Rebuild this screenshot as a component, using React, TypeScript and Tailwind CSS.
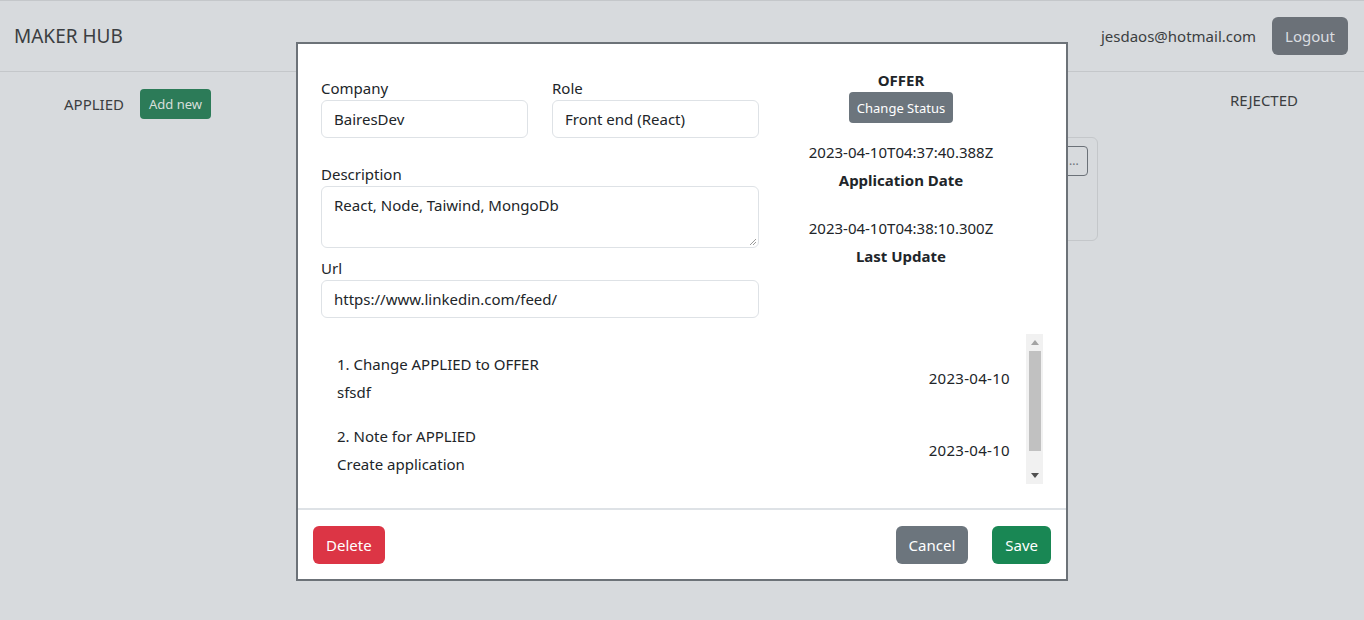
import React from "react";

function Field({ label, value, className = "" }: { label: string; value: string; className?: string }) {
  return (
    <div className={className}>
      <div className="h-[24px] leading-[24px]">{label}</div>
      <div className="h-[38px] rounded-[6px] border border-[#dee2e6] px-[12px] flex items-center">{value}</div>
    </div>
  );
}

function Note({ n, title, text, date }: { n: number; title: string; text: string; date: string }) {
  return (
    <div className="flex items-center justify-between px-[16px]">
      <div className="leading-[28px]">
        <div>
          {n}. {title}
        </div>
        <div>{text}</div>
      </div>
      <div className="tracking-[0.3px]">{date}</div>
    </div>
  );
}

export default function App() {
  return (
    <div className="relative w-[1364px] h-[620px] overflow-hidden bg-[#d7dadd] font-['Noto_Sans',sans-serif] text-[15px] leading-[24px] text-[#3b3e41]">
      <header className="h-[72px] border-t border-b border-[#c4c7ca] flex items-center justify-between pl-[14px] pr-[16px]">
        <div className="text-[19px]">MAKER HUB</div>
        <div className="flex items-center gap-[16px]">
          <span>jesdaos@hotmail.com</span>
          <button className="h-[38px] px-[13px] rounded-[6px] bg-[#6b7178] text-[#dadde0]">Logout</button>
        </div>
      </header>

      <main className="flex items-start">
        <div className="pl-[64px] pt-[17px] flex items-center gap-[16px]">
          <span>APPLIED</span>
          <button className="h-[30px] px-[9px] rounded-[4px] bg-[#2c7b58] text-[#d7dfdb] text-[13px]">Add new</button>
        </div>
        <div className="flex-1 flex justify-end pt-[65px]">
          <div className="w-[250px] h-[104px] rounded-[6px] border border-[#c4c7ca] flex justify-end items-start pt-[8px] pr-[9px]">
            <div className="w-[28px] h-[30px] rounded-[4px] border border-[#6b7178] flex items-center justify-center text-[12px] text-[#6b7178]">
              ...
            </div>
          </div>
        </div>
        <div className="pl-[132px] pr-[66px] pt-[16px]">REJECTED</div>
      </main>

      <div className="absolute left-[296px] top-[42px] w-[772px] h-[539px] bg-white border-2 border-[#6c7278] flex flex-col text-[#212529]">
        <div className="flex-1 pl-[23px] pt-[24px]">
          <div className="flex">
            <div className="w-[438px] pt-[8px]">
              <div className="grid grid-cols-2 gap-[24px]">
                <Field label="Company" value="BairesDev" />
                <Field label="Role" value="Front end (React)" />
              </div>
              <div className="mt-[24px]">
                <div className="h-[24px]">Description</div>
                <div className="relative h-[62px] rounded-[6px] border border-[#dee2e6] px-[12px] pt-[6px]">
                  React, Node, Taiwind, MongoDb
                  <svg className="absolute right-[1px] bottom-[1px]" width="9" height="9" viewBox="0 0 9 9">
                    <path d="M8 2 L2 8 M8 5 L5 8" stroke="#9a9a9a" strokeWidth="1" />
                  </svg>
                </div>
              </div>
              <Field className="mt-[8px]" label="Url" value="https://www.linkedin.com/feed/" />
            </div>
            <div className="w-[284px] flex flex-col items-center text-center">
              <div className="font-bold">OFFER</div>
              <button className="h-[31px] px-[8px] rounded-[4px] bg-[#6c757d] text-white text-[13px]">Change Status</button>
              <div className="mt-[17px]">2023-04-10T04:37:40.388Z</div>
              <div className="mt-[4px] font-bold">Application Date</div>
              <div className="mt-[24px]">2023-04-10T04:38:10.300Z</div>
              <div className="mt-[4px] font-bold">Last Update</div>
            </div>
          </div>

          <div className="mt-[16px] w-[722px] h-[150px] flex overflow-hidden">
            <div className="flex-1 pt-[16px] flex flex-col gap-[16px]">
              <Note n={1} title="Change APPLIED to OFFER" text="sfsdf" date="2023-04-10" />
              <Note n={2} title="Note for APPLIED" text="Create application" date="2023-04-10" />
            </div>
            <div className="w-[17px] h-full bg-[#f1f1f1] flex flex-col items-center">
              <div className="h-[17px] flex items-center justify-center">
                <svg width="8" height="5" viewBox="0 0 8 5">
                  <path d="M0 5 L4 0 L8 5 Z" fill="#a3a3a3" />
                </svg>
              </div>
              <div className="w-[12px] h-[100px] bg-[#c1c1c1]" />
              <div className="flex-1" />
              <div className="h-[17px] flex items-center justify-center">
                <svg width="8" height="5" viewBox="0 0 8 5">
                  <path d="M0 0 L8 0 L4 5 Z" fill="#505050" />
                </svg>
              </div>
            </div>
          </div>
        </div>

        <div className="h-[2px] bg-[#dee2e6]" />
        <div className="h-[69px] flex items-center justify-between px-[15px] pt-[1px]">
          <button className="h-[38px] px-[13px] rounded-[6px] bg-[#dc3545] text-white">Delete</button>
          <div className="flex items-center gap-[24px]">
            <button className="h-[38px] px-[13px] rounded-[6px] bg-[#6c757d] text-white">Cancel</button>
            <button className="h-[38px] px-[13px] rounded-[6px] bg-[#198754] text-white">Save</button>
          </div>
        </div>
      </div>
    </div>
  );
}
